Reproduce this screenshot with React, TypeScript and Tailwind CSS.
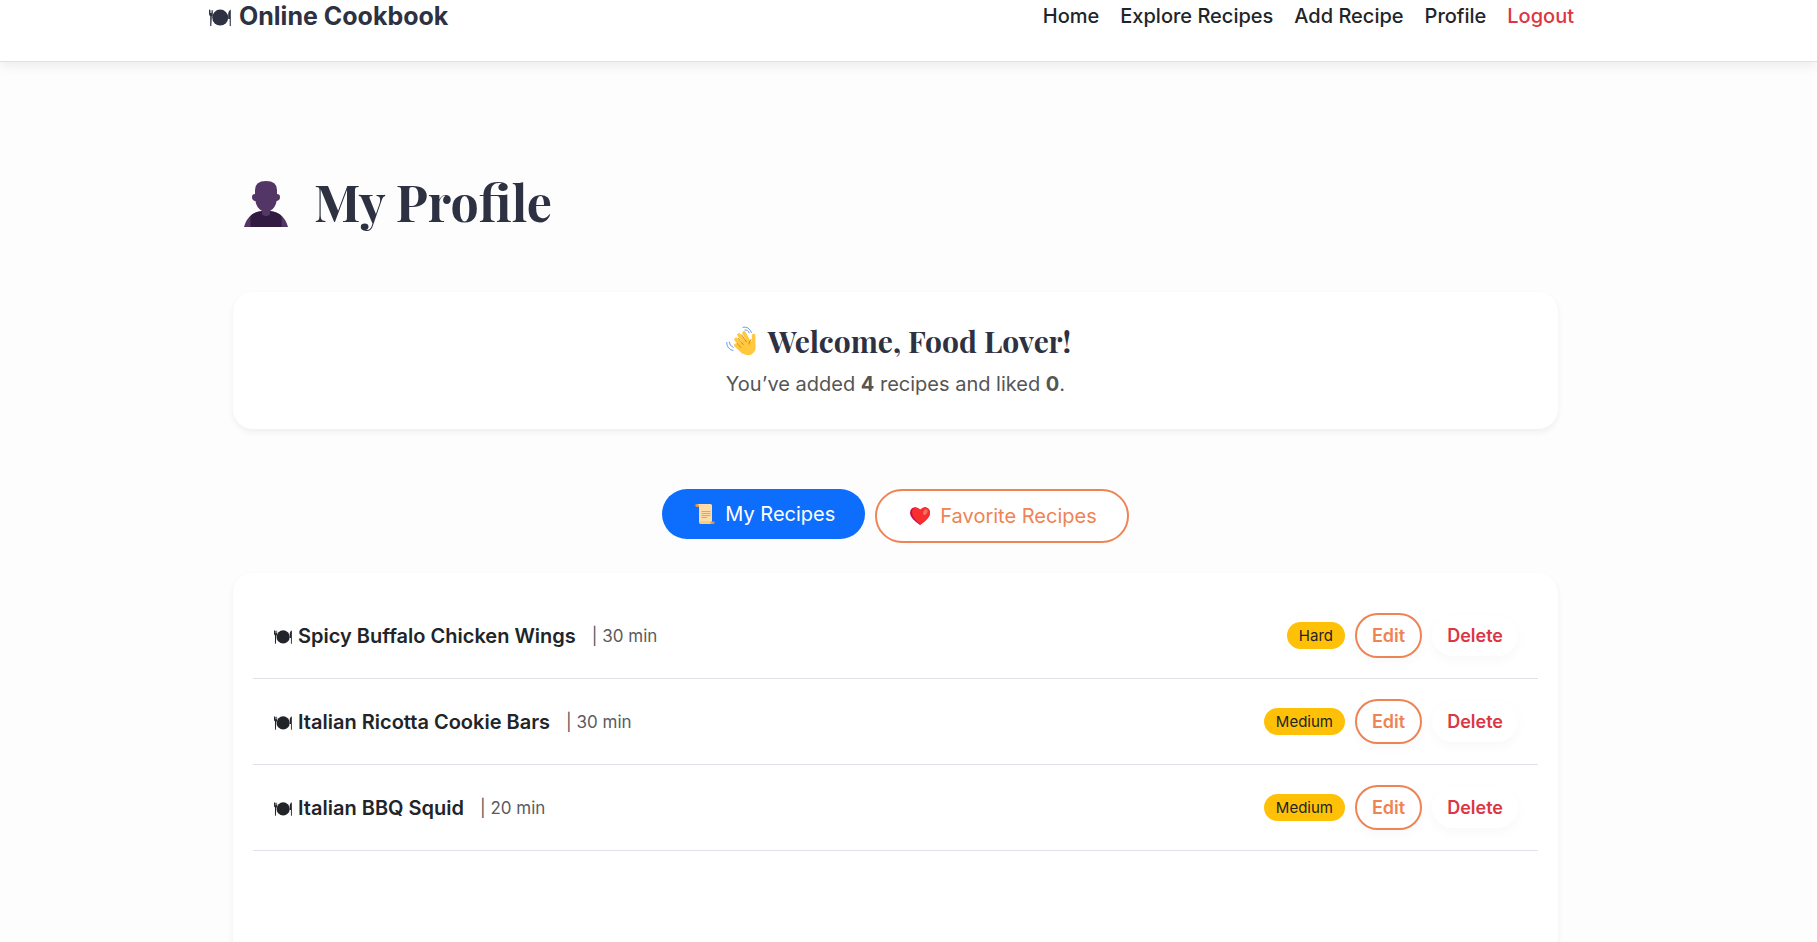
import React from "react";

type Recipe = { name: string; minutes: number; level: string };

const recipes: Recipe[] = [
  { name: "Spicy Buffalo Chicken Wings", minutes: 30, level: "Hard" },
  { name: "Italian Ricotta Cookie Bars", minutes: 30, level: "Medium" },
  { name: "Italian BBQ Squid", minutes: 20, level: "Medium" },
];

const navLinks = ["Home", "Explore Recipes", "Add Recipe", "Profile"];

function PlateIcon({ className }: { className: string }) {
  return (
    <svg viewBox="0 -2 22 19" className={className} fill="currentColor" aria-hidden="true">
      <circle cx="11.2" cy="8.6" r="8" />
      <path d="M0 1.500Q0 .5 .6.5T1.200 1.500V4h.5V1.200h.8V4H3V1.200h.8v4.600q0 1-1 1.500L2.300 17H1.200V7Q0 6.500 0 4.500z" />
      <path d="M21.800.4V17h-1.100V10h-1.500V4.500Q19.500 1.200 21.800.4z" />
    </svg>
  );
}

function PersonIcon() {
  return (
    <svg viewBox="0 -4 44 51" className="h-[51px] w-11" aria-hidden="true">
      <path d="M0 46Q2 38 8 33.500Q13 30 22 30T36 33.500Q42 38 44 46z" fill="#533566" />
      <path d="M6.500 46V35Q11 30.500 18 30q4 6 8 0q7 .5 11.500 5V46z" fill="#321b41" />
      <path d="M11 9Q11 0 22 0T33 9v4q3 0 3 3.200T32.600 20Q31.500 27 26 30v3.500q-4 3.500-8 0V30q-5.500-3-6.600-10Q8 19.500 8 16.200T11 13z" fill="#533566" />
    </svg>
  );
}

function WaveIcon() {
  return (
    <svg viewBox="0 0 30 30" className="h-[30px] w-[30px]" fill="none" strokeLinecap="round" aria-hidden="true">
      <ellipse cx="22" cy="21.500" rx="7.600" ry="7.800" fill="#ffc83d" />
      <path d="M9.800 19.300L17 26M10 13.500L18 22.500M13 9L20.500 19M18 6.800L23.500 17M27.600 9.500L27.500 20" stroke="#ffc83d" strokeWidth="3.600" />
      <path d="M11 17.300l3.800 4.200M12.200 12.300l5 6.200M15.600 8.800l4.600 6.700M24.800 13.500q-2 2-1.800 4.500" stroke="#d67d00" strokeWidth=".9" />
      <path d="M17 1.300q5.500-1.500 8.500 5.200M19 4q3-.5 4.200 2.800M.7 16.500q0 6.500 6.300 8M3.200 16q.3 4 4 5.500" stroke="#4f92ef" strokeWidth=".9" />
    </svg>
  );
}

function ScrollIcon() {
  return (
    <svg viewBox="0 0 20 21" className="h-[21px] w-5" aria-hidden="true">
      <path d="M2 0h13.500q1.500 0 1.500 1.500V18H4V3H2z" fill="#ffdca7" />
      <path d="M2 0Q0 0 .3 1.500T2 3h2V1.500Q4 0 2 0zM4 17.500h15.500q.5 2.500-1.500 2.500H6q-2 0-2-2.500z" fill="#e19747" />
      <path d="M4 17h11.500v1.500q0 1.500 1.500 1.500H6q-2 0-2-2z" fill="#ffce7c" />
      <path d="M6.500 7.500h9M6.500 9.500h9M6.500 11.500h9M6.500 13.500h5.500" stroke="#e19747" strokeWidth=".8" />
    </svg>
  );
}

function HeartIcon() {
  return (
    <svg viewBox="0 0 20 18" className="h-[18px] w-5" aria-hidden="true">
      <path d="M10 3Q7.500 0 4.500.3Q0 1 0 6Q0 11 10 18Q20 11 20 6Q20 1 15.500.3Q12.500 0 10 3z" fill="#ca0b4a" />
      <path d="M10.500 3Q8.500.2 5.500.5Q1.500 1.500 2 6Q2.500 11 10.500 17.500Q20 11 20 6Q20 1 15.500.3Q12.500 0 10.500 3z" fill="#f92f2f" />
      <ellipse cx="15.300" cy="5.200" rx="1.900" ry="3" transform="rotate(28 15.300 5.200)" fill="#f37366" />
    </svg>
  );
}

export default function App() {
  return (
    <div className="min-h-screen bg-[#fdfdfd] font-[Inter,sans-serif] text-[#212529]">
      <header className="border-b border-[#dee2e6] bg-white pr-[34px] pb-[29px] shadow-[0_3px_12px_rgba(0,0,0,0.08)]">
        <div className="mx-auto flex w-full max-w-[1365px] items-end justify-between">
          <a href="#" className="flex items-center gap-2 text-[25px] leading-8 font-bold text-[#2d3142]">
            <PlateIcon className="h-[19px] w-[22px]" />
            Online Cookbook
          </a>
          <nav className="flex gap-[21px] text-xl leading-[31px] font-medium">
            {navLinks.map((label) => (
              <a key={label} href="#">{label}</a>
            ))}
            <a href="#" className="text-[#dc3545]">Logout</a>
          </nav>
        </div>
      </header>

      <main className="pr-[26px]">
        <div className="mx-auto w-full max-w-[1325px] pt-[110px]">
          <h1 className="flex items-center gap-[26px] pl-[11px] font-['Playfair_Display','Liberation_Serif',serif] text-[50px] leading-[60px] font-bold text-[#2d3142]">
            <PersonIcon />
            My Profile
          </h1>

          <section className="mt-[60px] flex justify-center rounded-[20px] bg-white pt-[30px] pb-[30px] pl-[6px] shadow-[0_3px_6px_rgba(0,0,0,0.06)]">
            <div>
              <h2 className="flex items-center gap-3 font-['Playfair_Display','Liberation_Serif',serif] text-[30px] leading-[38px] font-bold text-[#2d3142]">
                <WaveIcon />
                Welcome, Food Lover!
              </h2>
              <p className="mt-[9px] text-xl leading-[30px] text-[#555555]">
                You’ve added <strong>4</strong> recipes and liked <strong>0</strong>.
              </p>
            </div>
          </section>

          <div className="mt-[60px] flex items-start justify-center gap-[10px] text-xl leading-[30px]">
            <button type="button" className="flex items-center gap-[10px] rounded-full bg-[#0d6efd] py-[10px] pr-[30px] pl-[33px] text-white">
              <ScrollIcon />
              My Recipes
            </button>
            <button type="button" className="flex items-center gap-[10px] rounded-full border-2 border-[#ef8354] bg-white py-[10px] pr-[30px] pl-[33px] text-[#ef8354]">
              <HeartIcon />
              Favorite Recipes
            </button>
          </div>

          <section className="mt-[30px] rounded-[20px] bg-white px-5 pt-5 pb-[106px] shadow-[0_3px_6px_rgba(0,0,0,0.06)]">
            <ul>
              {recipes.map((recipe) => (
                <li key={recipe.name} className="flex items-center justify-between border-b border-[#dee2e6] px-5 py-5">
                  <div className="flex items-center">
                    <PlateIcon className="mr-[6px] ml-px h-4 w-[18px]" />
                    <strong className="text-xl leading-[30px] font-semibold">{recipe.name}</strong>
                    <span className="ml-4 text-[17px] leading-[30px] text-[#595c5f]">| {recipe.minutes} min</span>
                  </div>
                  <div className="flex items-center gap-[10px]">
                    <span className="rounded-full bg-[#ffc107] px-3 text-[15px] leading-[27px]">{recipe.level}</span>
                    <button type="button" className="rounded-full border-2 border-[#ef8354] bg-white px-[15px] py-[7px] text-lg leading-[27px] font-semibold text-[#ef8354] shadow-[0_4px_12px_rgba(0,0,0,0.03)]">Edit</button>
                    <button type="button" className="rounded-full bg-white px-[15px] py-[7px] text-lg leading-[27px] font-semibold text-[#dc3545] shadow-[0_4px_12px_rgba(0,0,0,0.03)]">Delete</button>
                  </div>
                </li>
              ))}
            </ul>
          </section>
        </div>
      </main>
    </div>
  );
}
